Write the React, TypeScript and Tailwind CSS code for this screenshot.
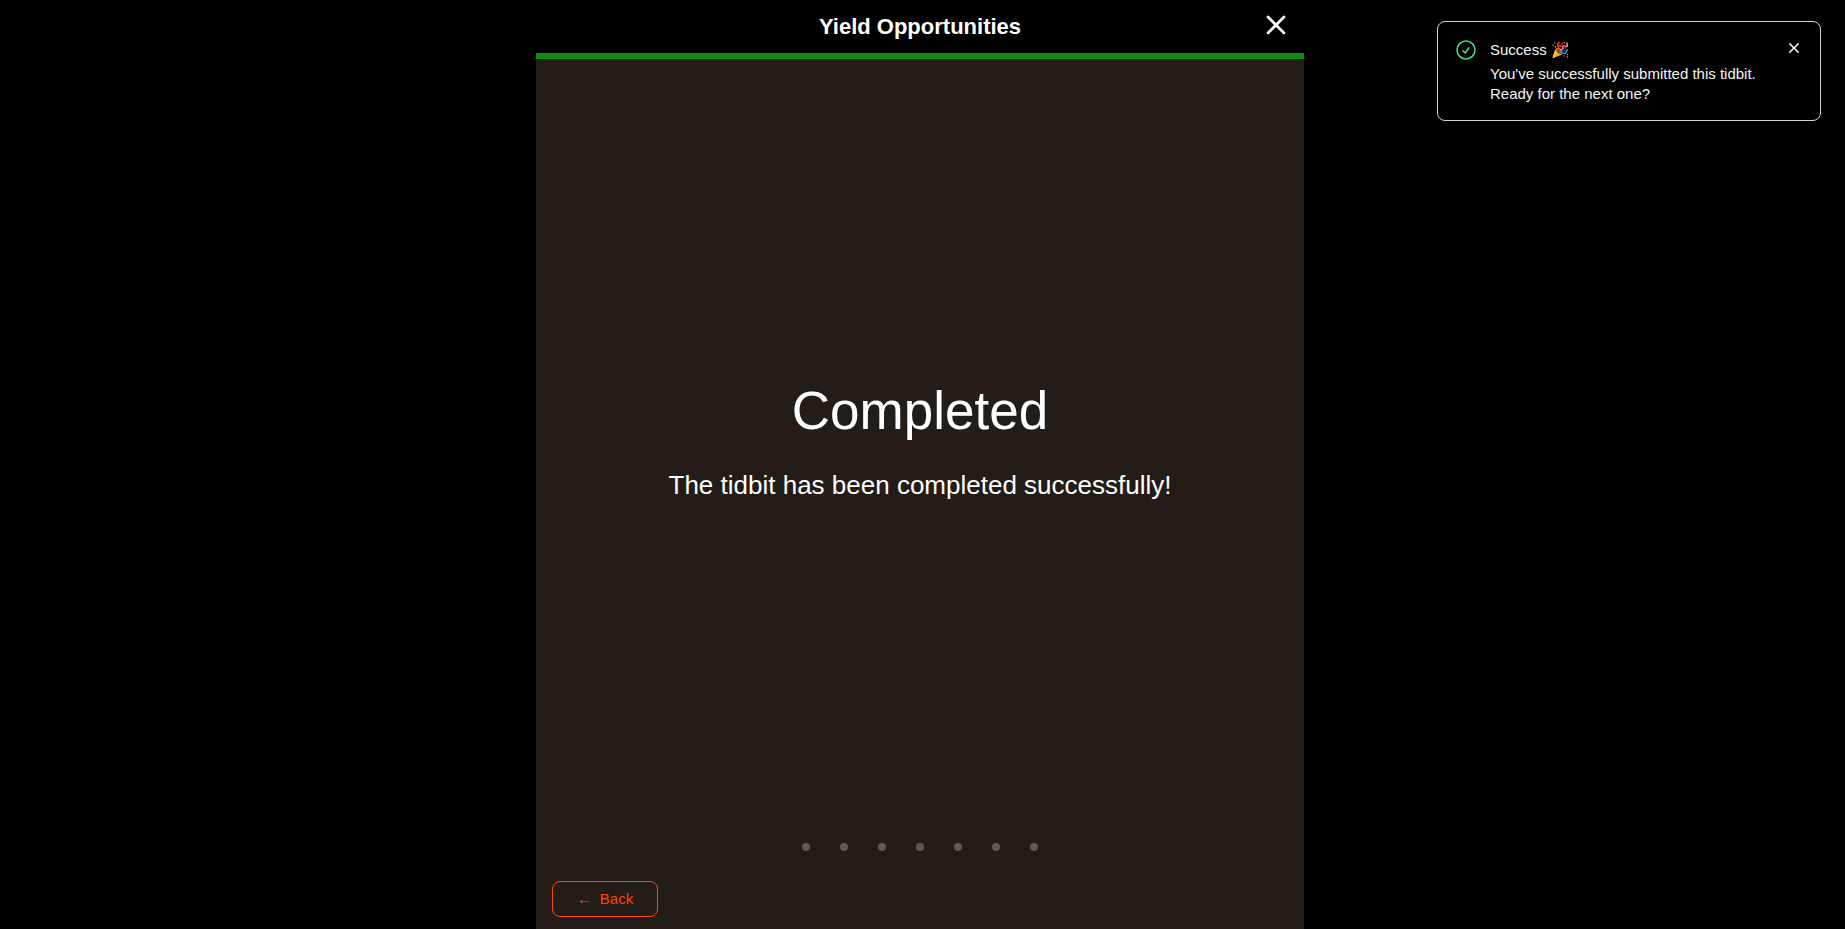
import React from "react";

const STEPS = ["1", "2", "3", "4", "5", "6", "7"];

function Toast() {
  return (
    <div role="status" className="absolute top-[21px] right-6 flex w-96 items-start rounded-lg border border-gray-300 bg-black p-4 text-[15px] leading-5 text-gray-100">
      <svg className="size-6 shrink-0 text-[#4ade80]" viewBox="0 0 24 24" fill="none" stroke="currentColor" strokeWidth={1.5} strokeLinecap="round" strokeLinejoin="round" aria-hidden="true">
        <path d="M9 12.75L11.25 15 15 9.75M21 12a9 9 0 11-18 0 9 9 0 0118 0z" />
      </svg>
      <div className="ml-3 flex-1 pt-0.5">
        <p>Success 🎉</p>
        <p className="mt-1">You've successfully submitted this tidbit. Ready for the next one?</p>
      </div>
      <button type="button" aria-label="Dismiss" className="ml-4 text-white">
        <svg className="size-5" viewBox="0 0 20 20" fill="currentColor" aria-hidden="true">
          <path d="M6.28 5.22a.75.75 0 00-1.06 1.06L8.94 10l-3.72 3.72a.75.75 0 101.06 1.06L10 11.06l3.72 3.72a.75.75 0 101.06-1.06L11.06 10l3.72-3.72a.75.75 0 00-1.06-1.06L10 8.94 6.28 5.22z" />
        </svg>
      </button>
    </div>
  );
}

export default function App() {
  return (
    <div className="relative min-h-screen bg-black pr-[5px] font-['Liberation_Sans',Arial,sans-serif] text-white">
      <main className="mx-auto flex min-h-screen max-w-3xl flex-col">
        <header className="grid h-[53px] grid-cols-[1fr_auto_1fr] items-center px-3">
          <h1 className="col-start-2 text-[22px] font-bold">Yield Opportunities</h1>
          <button type="button" aria-label="Close" className="mb-1 justify-self-end">
            <svg className="size-8" viewBox="0 0 24 24" fill="none" stroke="currentColor" strokeWidth={2} strokeLinecap="round" strokeLinejoin="round" aria-hidden="true">
              <path d="M6 18L18 6M6 6l12 12" />
            </svg>
          </button>
        </header>
        <div className="h-1.5 bg-[#0d8c0d]" />
        <section className="flex flex-1 flex-col bg-[#241d17] px-4 pb-3">
          <div className="flex flex-1 flex-col items-center justify-center pb-[18px] text-center">
            <h2 className="text-[53px] leading-[60px]">Completed</h2>
            <p className="mt-[26px] text-[26px] leading-9">The tidbit has been completed successfully!</p>
          </div>
          <div className="flex justify-center gap-[30px]">
            {STEPS.map((step) => (
              <span key={step} className="size-2 rounded-full bg-[#5a5a5a]" />
            ))}
          </div>
          <button type="button" className="mt-[30px] flex h-9 w-[106px] items-center justify-center gap-2 rounded-lg border border-[#ff4500] text-[15px] text-[#ff4500]">
            <span aria-hidden="true">←</span>
            <span>Back</span>
          </button>
        </section>
      </main>
      <Toast />
    </div>
  );
}
